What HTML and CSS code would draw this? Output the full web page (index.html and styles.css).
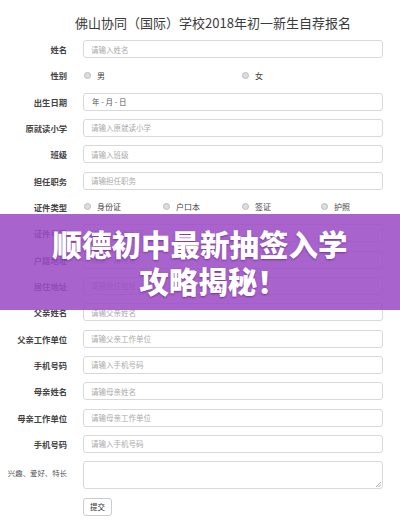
FILE: index.html
```html
<!DOCTYPE html>
<html lang="zh-CN">
<head>
<meta charset="utf-8">
<title>报名</title>
<link rel="stylesheet" href="styles.css">
</head>
<body>
<div class="page">
  <h1 class="title">佛山协同（国际）学校2018年初一新生自荐报名</h1>
  <form class="form">
    <div class="row"><label class="lbl">姓名</label><div class="field"><span class="ph">请输入姓名</span></div></div>
    <div class="row"><label class="lbl">性别</label>
      <div class="opts">
        <span class="opt"><i class="radio"></i>男</span>
        <span class="opt"></span>
        <span class="opt"><i class="radio"></i>女</span>
      </div>
    </div>
    <div class="row"><label class="lbl">出生日期</label><div class="field"><span class="date">年 - 月 - 日</span></div></div>
    <div class="row"><label class="lbl">原就读小学</label><div class="field"><span class="ph">请输入原就读小学</span></div></div>
    <div class="row"><label class="lbl">班级</label><div class="field"><span class="ph">请输入班级</span></div></div>
    <div class="row"><label class="lbl">担任职务</label><div class="field"><span class="ph">请输担任职务</span></div></div>
    <div class="row"><label class="lbl">证件类型</label>
      <div class="opts">
        <span class="opt"><i class="radio"></i>身份证</span>
        <span class="opt"><i class="radio"></i>户口本</span>
        <span class="opt"><i class="radio"></i>签证</span>
        <span class="opt"><i class="radio"></i>护照</span>
      </div>
    </div>
    <div class="row"><label class="lbl">证件号码</label><div class="field"><span class="ph">请输入证件号码</span></div></div>
    <div class="row"><label class="lbl">户籍地址</label><div class="field"><span class="ph">请输户籍地址</span></div></div>
    <div class="row"><label class="lbl">居住地址</label><div class="field"><span class="ph">请输居住地址</span></div></div>
    <div class="row"><label class="lbl">父亲姓名</label><div class="field"><span class="ph">请输父亲姓名</span></div></div>
    <div class="row"><label class="lbl">父亲工作单位</label><div class="field"><span class="ph">请输父亲工作单位</span></div></div>
    <div class="row"><label class="lbl">手机号码</label><div class="field"><span class="ph">请输入手机号码</span></div></div>
    <div class="row"><label class="lbl">母亲姓名</label><div class="field"><span class="ph">请输母亲姓名</span></div></div>
    <div class="row"><label class="lbl">母亲工作单位</label><div class="field"><span class="ph">请输母亲工作单位</span></div></div>
    <div class="row"><label class="lbl">手机号码</label><div class="field"><span class="ph">请输入手机号码</span></div></div>
    <div class="row row-top"><label class="lbl lbl-top">兴趣、爱好、特长</label>
      <div class="field area">
        <svg class="grip" width="6" height="6" viewBox="0 0 6 6"><path d="M6 1 L1 6 M6 3.5 L3.5 6" stroke="#999" stroke-width="0.8"/></svg>
      </div>
    </div>
    <div class="row"><span class="lbl"></span><span class="btn">提交</span></div>
  </form>
  <div class="banner">
    <div class="b1">顺德初中最新抽签入学</div>
    <div class="b2">攻略揭秘！</div>
  </div>
</div>
</body>
</html>
```
FILE: styles.css
```css
html, body {
  margin: 0;
  padding: 0;
  background: #fff;
}
body {
  font-family: "Noto Sans CJK SC", "Noto Sans", sans-serif;
  color: #333;
}
.page {
  position: relative;
  width: 400px;
  height: 524px;
  overflow: hidden;
}
.title {
  margin: 0;
  height: 40px;
  padding-left: 26px;
  display: flex;
  align-items: center;
  justify-content: center;
  font-size: 13px;
  font-weight: 400;
  color: #3a3a3a;
  line-height: 1;
  padding-top: 5px;
  box-sizing: border-box;
}
.form {
  display: flex;
  flex-direction: column;
  gap: 8.33px;
  margin: 0;
}
.row {
  display: flex;
  align-items: center;
  height: 18px;
}
.row-top {
  align-items: flex-start;
  height: 28px;
}
.lbl {
  width: 67px;
  flex: none;
  margin-right: 16px;
  text-align: right;
  font-size: 8.3px;
  font-weight: 700;
  color: #444;
  white-space: nowrap;
}
.lbl-top {
  padding-top: 6px;
  font-size: 7.4px;
  font-weight: 400;
  color: #555;
}
.field {
  width: 300px;
  height: 18px;
  box-sizing: border-box;
  border: 1px solid #d9d9d9;
  border-radius: 3px;
  display: flex;
  align-items: center;
  padding-left: 7px;
}
.area {
  height: 28px;
  position: relative;
  align-items: flex-end;
  justify-content: flex-end;
  padding: 0 1px 1px 0;
}
.grip {
  display: block;
}
.ph {
  font-size: 7.5px;
  color: #aaa;
}
.date {
  font-size: 7.5px;
  color: #555;
  padding-left: 1px;
}
.opts {
  display: flex;
}
.opt {
  width: 79px;
  display: flex;
  align-items: center;
  font-size: 8px;
  color: #444;
}
.radio {
  display: inline-block;
  width: 5px;
  height: 5px;
  border-radius: 50%;
  background: #ddd;
  border: 0.5px solid #bbb;
  margin-left: 1px;
  margin-right: 6px;
}
.btn {
  width: 29px;
  height: 18px;
  box-sizing: border-box;
  border: 1px solid #ccc;
  border-radius: 3px;
  display: flex;
  align-items: center;
  justify-content: center;
  font-size: 7.5px;
  color: #333;
}
.banner {
  position: absolute;
  left: 0;
  top: 214px;
  width: 400px;
  height: 96px;
  background: rgba(156, 77, 198, 0.88);
  display: flex;
  flex-direction: column;
  align-items: center;
  justify-content: center;
  color: #fff;
  font-size: 29.5px;
  font-weight: 900;
  line-height: 37px;
  text-shadow: 0 1px 2px rgba(60, 0, 80, 0.45);
}
.b2 {
  padding-left: 26px;
}
```
